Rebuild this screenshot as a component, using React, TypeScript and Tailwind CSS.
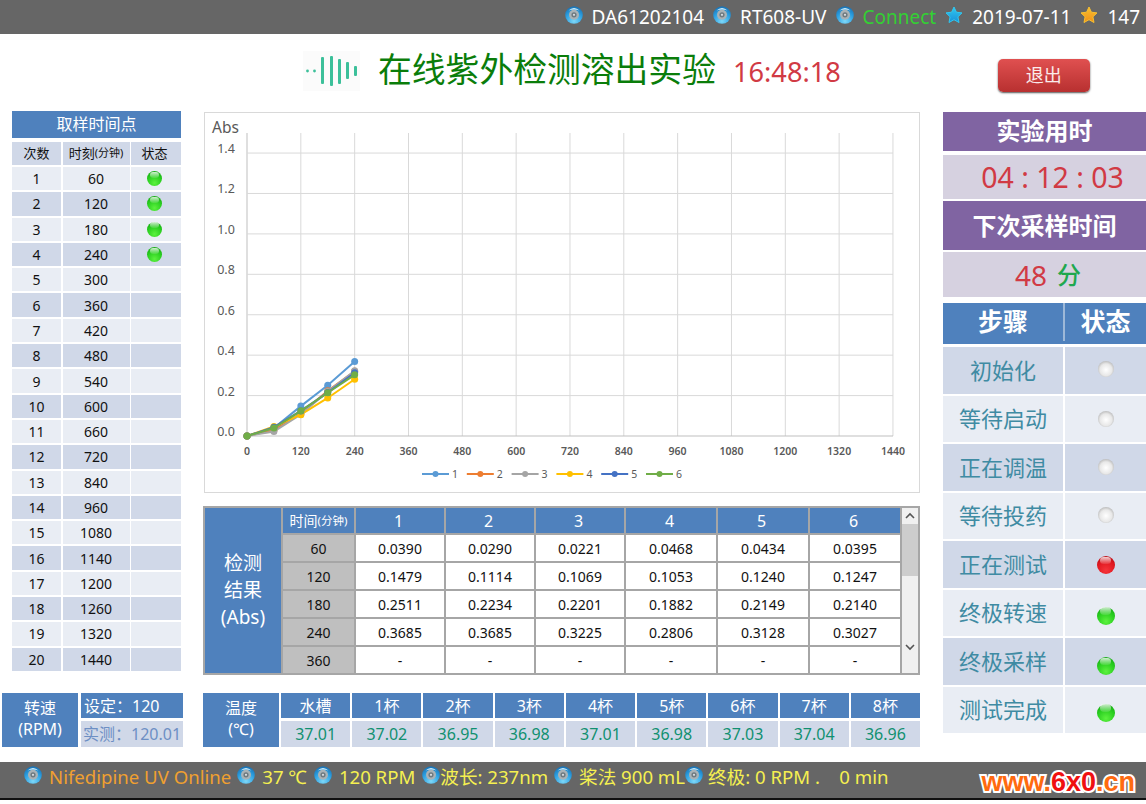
const cjk = `font-['Noto_Sans','Noto_Sans_CJK_SC',sans-serif]`

function Disc() {
  return (
    <svg width="18" height="18" viewBox="0 0 18 18" className="shrink-0 -mt-[5px]">
      <defs>
        <radialGradient id="disc" cx="50%" cy="85%" r="85%">
          <stop offset="0%" stopColor="#7fd8f8" />
          <stop offset="60%" stopColor="#2a9ee0" />
          <stop offset="100%" stopColor="#1a6fb0" />
        </radialGradient>
      </defs>
      <circle cx="9" cy="9" r="8.8" fill="url(#disc)" />
      <circle cx="9" cy="8.8" r="5" fill="#a9b2b6" />
      <circle cx="9" cy="8.8" r="2.6" fill="#6f7a80" />
      <circle cx="9" cy="8.8" r="1.1" fill="#d9dfe2" />
      <path d="M3.5 4.5 Q9 -0.5 14.5 4.5 Q9 2.6 3.5 4.5Z" fill="#d8f1fb" />
    </svg>
  )
}

function Star({ from, to }: { from: string; to: string }) {
  const id = "star" + from.slice(1)
  return (
    <svg width="18" height="18" viewBox="0 0 18 18" className="shrink-0 -mt-[5px]">
      <defs>
        <linearGradient id={id} x1="0" y1="0" x2="0" y2="1">
          <stop offset="0%" stopColor={from} />
          <stop offset="100%" stopColor={to} />
        </linearGradient>
      </defs>
      <path
        d="M9 1 L11.4 6.2 L17 6.9 L12.9 10.8 L14 16.5 L9 13.7 L4 16.5 L5.1 10.8 L1 6.9 L6.6 6.2Z"
        fill={`url(#${id})`}
        stroke={from}
        strokeWidth="1"
        strokeLinejoin="round"
      />
    </svg>
  )
}

function Light({ color, big }: { color: "green" | "red" | "off"; big?: boolean }) {
  const base =
    color === "green"
      ? "bg-[radial-gradient(circle_at_50%_80%,#5cf23e_0%,#27cc1e_55%,#119a12_100%)]"
      : color === "red"
      ? "bg-[radial-gradient(circle_at_50%_80%,#f5343a_0%,#e01820_55%,#a80c12_100%)]"
      : "bg-[radial-gradient(circle_at_50%_55%,#ffffff_0%,#e8e8e8_50%,#8c8c8c_100%)]"
  const size = !big ? "w-[15px] h-[15px]" : color === "off" ? "w-[16px] h-[16px]" : "w-[18px] h-[18px]"
  return (
    <span className={`relative block rounded-full ${base} ${size}`}>
      {color !== "off" && (
        <span className="absolute left-[20%] right-[20%] top-[4%] h-[40%] rounded-full bg-gradient-to-b from-white/80 to-white/10" />
      )}
    </span>
  )
}

const samples = [
  [1, 60], [2, 120], [3, 180], [4, 240], [5, 300], [6, 360], [7, 420], [8, 480], [9, 540], [10, 600],
  [11, 660], [12, 720], [13, 840], [14, 960], [15, 1080], [16, 1140], [17, 1200], [18, 1260], [19, 1320], [20, 1440],
]

function SampleTable() {
  return (
    <div className="w-[169px] text-[14px] text-[#111]">
      <div className="h-[27px] pb-[1px] bg-[#4f81bd] text-white text-[16px] flex items-center justify-center">取样时间点</div>
      <div className="mt-[4px] grid grid-cols-[49px_67px_50px] gap-x-[1.5px] gap-y-[2px]">
        <div className="h-[23px] bg-[#d0d8e8] flex items-center justify-center text-[13px]">次数</div>
        <div className="h-[23px] bg-[#d0d8e8] flex items-center justify-center text-[13px]">
          时刻<span className="text-[11px]">(分钟)</span>
        </div>
        <div className="h-[23px] bg-[#d0d8e8] flex items-center justify-center text-[13px] pr-[3px]">状态</div>
        {samples.map(([n, t], i) => {
          const bg = i % 2 === 0 ? "bg-[#e9edf4]" : "bg-[#d0d8e8]"
          return [
            <div key={n + "a"} className={`h-[23.3px] ${bg} flex items-center justify-center`}>{n}</div>,
            <div key={n + "b"} className={`h-[23.3px] ${bg} flex items-center justify-center`}>{t}</div>,
            <div key={n + "c"} className={`h-[23.3px] ${bg} flex items-center justify-center pr-[3px]`}>
              {i < 4 && <Light color="green" />}
            </div>,
          ]
        })}
      </div>
    </div>
  )
}

const series = [
  { name: "1", color: "#5b9bd5", v: [0, 0.039, 0.1479, 0.2511, 0.3685] },
  { name: "2", color: "#ed7d31", v: [0, 0.029, 0.1114, 0.2234, 0.32] },
  { name: "3", color: "#a5a5a5", v: [0, 0.0221, 0.1069, 0.2201, 0.3225] },
  { name: "4", color: "#ffc000", v: [0, 0.0468, 0.1053, 0.1882, 0.2806] },
  { name: "5", color: "#4472c4", v: [0, 0.0434, 0.124, 0.2149, 0.3128] },
  { name: "6", color: "#70ad47", v: [0, 0.0395, 0.1247, 0.214, 0.3027] },
]

// svg origin is the chart box corner (204,112)
const px = (t: number) => 43 + (t / 120) * 53.83
const py = (v: number) => 324 - v * 202.1

function Chart() {
  const xs = Array.from({ length: 13 }, (_, i) => i * 120)
  const ys = [0, 0.2, 0.4, 0.6, 0.8, 1.0, 1.2, 1.4]
  return (
    <div className="w-[716px] h-[381px] border border-[#d9d9d9] bg-white">
      <svg width="714" height="379" viewBox="1 1 714 379" fontFamily="'Noto Sans','Open Sans',sans-serif">
        <text x="8" y="21" fontSize="15.5" fill="#595959">Abs</text>
        {xs.map((t) => (
          <line key={t} x1={px(t)} x2={px(t)} y1="21" y2="324" stroke={t === 0 ? "#bfbfbf" : "#d9d9d9"} />
        ))}
        {ys.map((v) => (
          <line key={v} x1="43" x2="689" y1={py(v)} y2={py(v)} stroke={v === 0 ? "#bfbfbf" : "#d9d9d9"} />
        ))}
        {ys.map((v) => (
          <text key={v} x="22" y={py(v) + 0} textAnchor="middle" fontSize="12.5" fill="#595959">{v.toFixed(1)}</text>
        ))}
        {xs.map((t) => (
          <text key={t} x={px(t)} y="343" textAnchor="middle" fontSize="10.5" fontWeight="600" fill="#595959">{t}</text>
        ))}
        {series.map((s) => (
          <g key={s.name}>
            <polyline
              points={s.v.map((v, i) => `${px(i * 60)},${py(v)}`).join(" ")}
              fill="none"
              stroke={s.color}
              strokeWidth="2"
            />
            {s.v.map((v, i) => (
              <circle key={i} cx={px(i * 60)} cy={py(v)} r="3.5" fill={s.color} />
            ))}
          </g>
        ))}
        {series.map((s, i) => {
          const x = 218 + i * 44.8
          return (
            <g key={s.name}>
              <line x1={x} x2={x + 27} y1="362" y2="362" stroke={s.color} strokeWidth="2" />
              <circle cx={x + 13.5} cy="362" r="3" fill={s.color} />
              <text x={x + 30} y="365.5" fontSize="10.5" fill="#595959">{s.name}</text>
            </g>
          )
        })}
      </svg>
    </div>
  )
}

const results = [
  ["60", "0.0390", "0.0290", "0.0221", "0.0468", "0.0434", "0.0395"],
  ["120", "0.1479", "0.1114", "0.1069", "0.1053", "0.1240", "0.1247"],
  ["180", "0.2511", "0.2234", "0.2201", "0.1882", "0.2149", "0.2140"],
  ["240", "0.3685", "0.3685", "0.3225", "0.2806", "0.3128", "0.3027"],
  ["360", "-", "-", "-", "-", "-", "-"],
]

function ResultTable() {
  return (
    <div className="w-[717px] h-[169px] bg-[#a6a6a6] p-[2px] grid grid-cols-[76px_71px_88px_88px_88px_90px_90px_90px_16px] grid-rows-[25px_26px_26px_26px_26px_26px] gap-[2px] text-[14px] text-[#111]">
      <div className="row-span-6 bg-[#4f81bd] text-white text-[19px] leading-[27px] flex items-center justify-center text-center">
        <div>检测<br />结果<br />(Abs)</div>
      </div>
      <div className="bg-[#4f81bd] text-white text-[14px] flex items-center justify-center">
        时间<span className="text-[11.5px]">(分钟)</span>
      </div>
      {[1, 2, 3, 4, 5, 6].map((n) => (
        <div key={n} className="bg-[#4f81bd] text-white text-[16px] pr-[3px] flex items-center justify-center">{n}</div>
      ))}
      <div className="row-span-6 bg-[#f0f0f0] flex flex-col items-center">
        <svg width="16" height="16" viewBox="0 0 16 16">
          <path d="M4 10 L8 6 L12 10" fill="none" stroke="#555" strokeWidth="1.6" />
        </svg>
        <div className="w-full h-[52px] bg-[#cdcdcd]" />
        <svg className="mt-auto mb-[18px]" width="16" height="16" viewBox="0 0 16 16">
          <path d="M4 6 L8 10 L12 6" fill="none" stroke="#555" strokeWidth="1.6" />
        </svg>
      </div>
      {results.map((r) =>
        r.map((c, i) => (
          <div key={r[0] + i} className={`${i === 0 ? "bg-[#bfbfbf]" : "bg-white"} flex items-center justify-center`}>
            {c}
          </div>
        ))
      )}
    </div>
  )
}

const temps = [
  ["水槽", "37.01"], ["1杯", "37.02"], ["2杯", "36.95"], ["3杯", "36.98"], ["4杯", "37.01"],
  ["5杯", "36.98"], ["6杯", "37.03"], ["7杯", "37.04"], ["8杯", "36.96"],
]

function BottomRow() {
  return (
    <div className="mt-[18px] pl-[2px] flex text-[16px]">
      <div className="w-[76px] h-[54px] bg-[#4f81bd] text-white leading-[21px] pb-[2px] flex items-center justify-center text-center">
        <div>转速<br />(RPM)</div>
      </div>
      <div className="ml-[3px] w-[102px] flex flex-col gap-[3px]">
        <div className="h-[25px] bg-[#4f81bd] text-white flex items-center pl-[3px]">设定：120</div>
        <div className="h-[26px] bg-[#d0d8e8] text-[#6d8fc4] flex items-center pl-[2px] whitespace-nowrap">实测：120.01</div>
      </div>
      <div className="ml-[20px] w-[76px] h-[54px] bg-[#4f81bd] text-white leading-[21px] pb-[2px] flex items-center justify-center text-center">
        <div>温度<br />(℃)</div>
      </div>
      <div className="ml-[2px] w-[639px] grid grid-cols-9 gap-x-[2px] gap-y-[3px] grid-rows-[25px_26px]">
        {temps.map(([h]) => (
          <div key={h} className="bg-[#4f81bd] text-white flex items-center justify-center">{h}</div>
        ))}
        {temps.map(([h, v]) => (
          <div key={h} className="bg-[#d0d8e8] text-[#119070] flex items-center justify-center">{v}</div>
        ))}
      </div>
    </div>
  )
}

const steps: [string, "off" | "red" | "green", string][] = [
  ["初始化", "off", "pb-[3px]"], ["等待启动", "off", ""], ["正在调温", "off", ""], ["等待投药", "off", "pb-[2px]"],
  ["正在测试", "red", "pt-[2px]"], ["终极转速", "green", "pt-[6px]"], ["终极采样", "green", "pt-[10px]"], ["测试完成", "green", "pt-[6px]"],
]

function RightPanel() {
  return (
    <div className="mt-[1px] w-[203px] flex flex-col">
      <div className="h-[39px] pb-[2px] bg-[#8064a2] text-white text-[24px] font-bold flex items-center justify-center">实验用时</div>
      <div className="mt-[4px] h-[44px] pl-[16px] bg-[#d6d1e0] text-[#d13a44] text-[28.5px] flex items-center justify-center">04 : 12 : 03</div>
      <div className="mt-[2px] h-[49px] bg-[#8064a2] text-white text-[24px] font-bold flex items-center justify-center">下次采样时间</div>
      <div className="mt-[2px] h-[45px] pl-[7px] bg-[#d6d1e0] text-[#d13a44] text-[28px] flex items-center justify-center">
        48<span className="ml-[10px] text-[#1fa84f] text-[24px] font-medium">分</span>
      </div>
      <div className="mt-[6px] h-[41px] pb-[3px] bg-[#4f81bd] grid grid-cols-[120px_81px] gap-x-[2px] text-white text-[25px] font-bold">
        <div className="flex items-center justify-center">步骤</div>
        <div className="flex items-center justify-center border-l-2 border-[#9db8d8] -ml-[2px]">状态</div>
      </div>
      <div className="mt-[3px] h-[386px] grid grid-cols-[120px_81px] grid-rows-8 gap-[2px] text-[#3f8ba3] text-[22px]">
        {steps.map(([s, l, nudge], i) => {
          const bg = i % 2 === 0 ? "bg-[#d0d8e8]" : "bg-[#e9edf4]"
          return [
            <div key={s} className={`${bg} flex items-center justify-center`}>{s}</div>,
            <div key={s + "l"} className={`${bg} ${nudge} flex items-center justify-center`}><Light color={l} big /></div>,
          ]
        })}
      </div>
    </div>
  )
}

export default function App() {
  return (
    <div className={`w-[1146px] h-[804px] bg-white overflow-hidden flex flex-col ${cjk}`}>
      <div className="h-[34px] bg-[#666] pt-[1px] flex items-center justify-end pr-[6px] text-[19px] text-white whitespace-nowrap">
        <Disc /><span className="ml-[9px]">DA61202104</span>
        <span className="ml-[9px]"><Disc /></span><span className="ml-[9px]">RT608-UV</span>
        <span className="ml-[9px]"><Disc /></span><span className="ml-[9px] text-[#33d033]">Connect</span>
        <span className="ml-[9px]"><Star from="#30c8f0" to="#1890d8" /></span><span className="ml-[9px]">2019-07-11</span>
        <span className="ml-[9px]"><Star from="#f8c030" to="#f09018" /></span><span className="ml-[9px]">147</span>
      </div>

      <div className="h-[77px] pl-[303px] flex items-center">
        <svg width="57" height="40" viewBox="0 0 57 40" className="bg-[#fbfbfb] mb-[3px]">
          <circle cx="4.5" cy="20" r="1.4" fill="#3cc09a" />
          <circle cx="11.5" cy="20" r="1.4" fill="#3cc09a" />
          <rect x="18" y="6" width="3" height="27" rx="1" fill="#3cc09a" />
          <rect x="27" y="5" width="3" height="30" rx="1" fill="#3cc09a" />
          <rect x="35" y="8" width="3" height="25" rx="1" fill="#3cc09a" />
          <rect x="43" y="11" width="3" height="17" rx="1" fill="#3cc09a" />
          <rect x="51" y="15" width="3" height="10" rx="1" fill="#3cc09a" />
        </svg>
        <h1 className="ml-[18px] mb-[6px] text-[#0a7d0a] text-[33.8px] leading-none whitespace-nowrap font-normal">在线紫外检测溶出实验</h1>
        <span className="ml-[17px] text-[#d13a44] text-[27.2px] whitespace-nowrap">16:48:18</span>
        <button className="ml-[157px] mt-[5px] w-[92px] h-[33px] rounded-[5px] bg-gradient-to-b from-[#e05050] to-[#b83030] text-white/90 text-[18px] shadow-[0_1px_2px_#555] flex items-center justify-center">退出</button>
      </div>

      <div className="h-[651px] flex">
        <div className="w-[943px] flex flex-col">
          <div className="flex">
            <div className="ml-[12px]"><SampleTable /></div>
            <div className="ml-[23px] mt-[1px] flex flex-col gap-[13px]">
              <Chart />
              <div className="-ml-[1px]"><ResultTable /></div>
            </div>
          </div>
          <BottomRow />
        </div>
        <RightPanel />
      </div>

      <div className="h-[36px] bg-[#666] pl-[24px] pb-[6px] flex items-center text-[18.6px] text-[#f5f050] whitespace-nowrap">
        <Disc />
        <span className="ml-[7px] text-[#f0a030]">Nifedipine UV Online</span>
        <span className="ml-[6px]"><Disc /></span><span className="ml-[7px]">37 ℃</span>
        <span className="ml-[7px]"><Disc /></span><span className="ml-[7px]">120 RPM</span>
        <span className="ml-[7px]"><Disc /></span><span>波长: 237nm</span>
        <span className="ml-[6px]"><Disc /></span><span className="ml-[7px]">桨法 900 mL</span>
        <span><Disc /></span><span className="ml-[5px]">终极: 0 RPM .&nbsp;&nbsp;&nbsp;&nbsp;0 min</span>
        <span className="ml-auto mr-[11px] mt-[10px] font-['Liberation_Sans',sans-serif] font-bold text-[27px] leading-none text-[#ff6a10] [-webkit-text-stroke:4px_#fff] [paint-order:stroke_fill]">
          www.<span className="text-[#f01010]">6x0</span>.cn
        </span>
      </div>
      <div className="h-[2px] bg-[#111]" />
    </div>
  )
}
